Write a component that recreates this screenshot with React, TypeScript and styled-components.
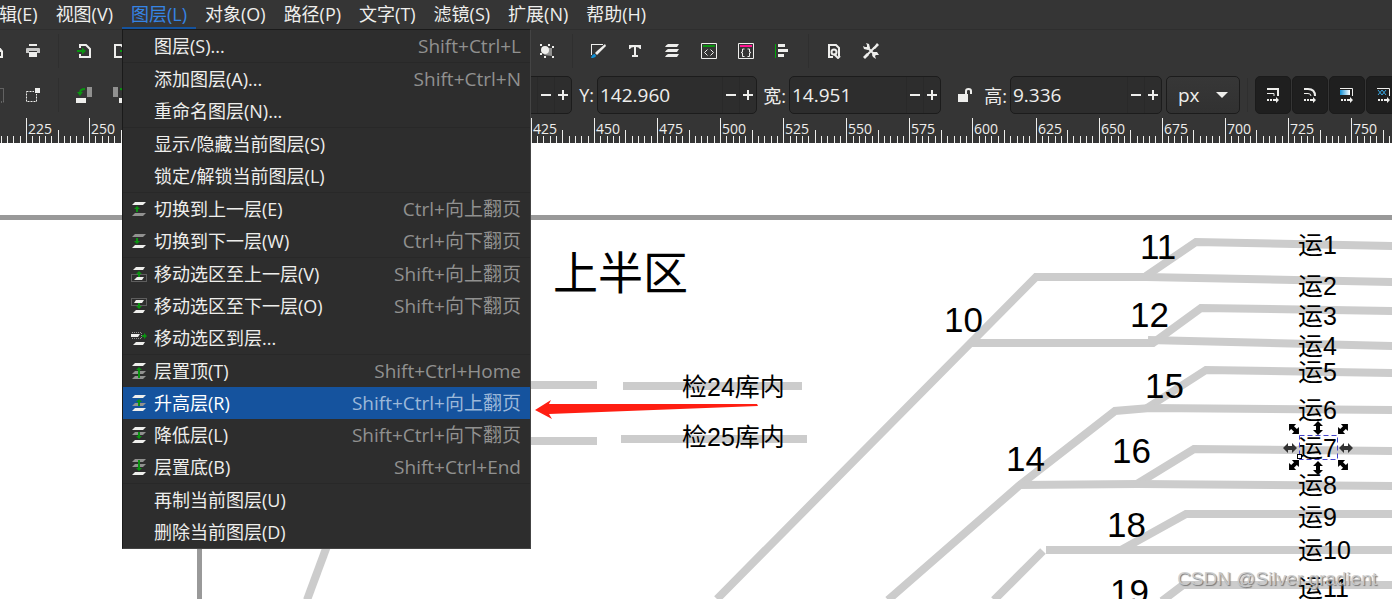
import React from "react";
import styled, { createGlobalStyle, css } from "styled-components";

const GlobalStyle = createGlobalStyle`
  * { box-sizing: border-box; }
  html, body { margin: 0; background: #ffffff; overflow: hidden; }
  body, button, input, select {
    font-family: "Open Sans", "Noto Sans CJK SC", sans-serif;
    font-size: 18px;
    color: #eeeeec;
  }
  button, input, select { margin: 0; padding: 0; border: 0; background: none; outline: none; }
`;

const WHITE = "#eeeeec";
const GRAY = "#919190";
const GREEN = "#0a9410";

/* ---------- layout ---------- */

const Window = styled.div`
  display: flex;
  flex-direction: column;
  min-height: 100vh;
  overflow: hidden;
`;

const Header = styled.header`
  background: #353535;
`;

const MenuBar = styled.nav`
  display: flex;
  height: 30px;
  margin-left: -28px;
  border-bottom: 1px solid #2e2e2e;
`;

const MenuSlot = styled.div`
  position: relative;
  flex: none;
`;

const MenuTitle = styled.button<{ $active?: boolean }>`
  height: 29px;
  padding: 2px 9px 0;
  line-height: 25px;
  white-space: nowrap;
  border-bottom: 2px solid transparent;
  ${(p) =>
    p.$active &&
    css`
      color: #3584e4;
      border-bottom-color: #15539e;
    `}
`;

const Dropdown = styled.div`
  position: absolute;
  z-index: 10;
  top: 29px;
  left: 0;
  width: 409px;
  background: #2d2d2d;
  border: 1px solid #1a1a1a;
  border-right-color: #444444;
  border-bottom-color: #444444;
`;

const Divider = styled.hr`
  height: 1px;
  margin: 0;
  border: 0;
  background: #282828;
`;

const MenuRow = styled.button<{ $selected?: boolean }>`
  display: flex;
  align-items: center;
  width: 100%;
  height: 32px;
  padding: 0 9px 0 8px;
  line-height: 32px;
  white-space: nowrap;
  text-align: left;
  background: ${(p) => (p.$selected ? "#15539e" : "transparent")};
  color: ${(p) => (p.$selected ? "#ffffff" : WHITE)};
`;

const RowIcon = styled.span`
  display: flex;
  width: 23px;
  flex: none;
`;

const RowLabel = styled.span`
  flex: 1;
`;

const Shortcut = styled.kbd<{ $selected?: boolean }>`
  font-family: inherit;
  font-size: 19px;
  color: ${(p) => (p.$selected ? "#9cb8d9" : GRAY)};
`;

const ToolRow = styled.div`
  display: flex;
  align-items: center;
  height: 42px;
  margin-left: -23px;
`;

const ControlRow = styled(ToolRow)`
  height: 46px;
`;

const ToolButton = styled.button`
  display: flex;
  align-items: center;
  justify-content: center;
  flex: none;
  width: 37px;
  height: 36px;
`;

const Separator = styled.div`
  flex: none;
  width: 1px;
  height: 34px;
  margin: 0 6px 0 7px;
  background: #2f2f2f;
`;

const Spacer = styled.div<{ $w: number }>`
  flex: none;
  width: ${(p) => p.$w}px;
`;

const FieldLabel = styled.label<{ $w: number }>`
  flex: none;
  width: ${(p) => p.$w}px;
  text-align: right;
  padding-right: 3px;
  white-space: nowrap;
`;

const SpinBox = styled.div<{ $w: number }>`
  display: flex;
  flex: none;
  width: ${(p) => p.$w}px;
  height: 38px;
  border: 1px solid #1c1c1c;
  border-radius: 5px;
  background: #2d2d2d;
`;

const SpinInput = styled.input`
  flex: 1;
  min-width: 0;
  padding-left: 2px;
  font-size: 19px;
`;

const SpinButton = styled.button`
  display: flex;
  align-items: center;
  justify-content: center;
  flex: none;
  width: 17px;
  border-left: 1px solid #292929;
`;

const UnitBox = styled.div`
  position: relative;
  flex: none;
  width: 74px;
  height: 38px;
  margin: 0 0 0 4px;
  border: 1px solid #1c1c1c;
  border-radius: 5px;
  background: linear-gradient(#373737, #313131);
  & > svg {
    position: absolute;
    right: 11px;
    top: 14px;
    pointer-events: none;
  }
`;

const UnitSelect = styled.select`
  width: 100%;
  height: 36px;
  padding-left: 11px;
  appearance: none;
  font-size: 19px;
`;

const ToggleButton = styled.button`
  display: flex;
  align-items: center;
  justify-content: center;
  flex: none;
  width: 36px;
  height: 38px;
  margin-left: 1px;
  border-radius: 5px;
  border: 1px solid #1b1b1b;
  background: #1f1f1f;
`;

const RulerSvg = styled.svg`
  display: block;
  width: 100%;
  height: 25px;
  text {
    font-family: "Open Sans", sans-serif;
    font-size: 14px;
    fill: ${WHITE};
  }
`;

const Canvas = styled.main`
  position: relative;
  display: flex;
  flex: 1;
  min-height: 456px;
  background: #ffffff;
`;

const Drawing = styled.svg`
  display: block;
  flex: 1;
  min-width: 0;
  font-family: "Liberation Sans", "Noto Sans CJK SC", sans-serif;
`;

const Watermark = styled.div`
  position: absolute;
  right: 15px;
  bottom: 9px;
  font-family: "Liberation Sans", sans-serif;
  font-size: 19px;
  line-height: 22px;
  color: rgba(205, 205, 205, 0.9);
  text-shadow: 1px 1px 1px #777777;
  white-space: nowrap;
`;

/* ---------- icons ---------- */

const Icon = ({ children, size = 16 }: { children: React.ReactNode; size?: number }) => (
  <svg width={size} height={size} viewBox={`0 0 ${size} ${size}`} fill="none" aria-hidden="true">
    {children}
  </svg>
);

const Sheet = ({ y, c = WHITE }: { y: number; c?: string }) => (
  <path d={`M4 ${y}H15L12 ${y + 3}H1Z`} fill={c} />
);
const up = (x: number, y: number, h: number) =>
  `M${x} ${y}l3 3h-2v${h - 3}h-2v${3 - h}h-2z`;
const down = (x: number, y: number, h: number) =>
  `M${x} ${y}l3 -3h-2v${3 - h}h-2v${h - 3}h-2z`;

const menuIcons: Record<string, React.ReactNode> = {
  prev: (<><Sheet y={1} /><path d={up(6, 5, 6)} fill={GREEN} /><Sheet y={12} c={GRAY} /></>),
  next: (<><Sheet y={1} c={GRAY} /><path d={down(6, 11, 6)} fill={GREEN} /><Sheet y={12} /></>),
  moveUp: (
    <>
      <path d="M5 1H14L12 4H2Z" fill={WHITE} />
      <path d="M.5 8.5H15.5V15.5H.5Z" stroke={GRAY} strokeDasharray="1 1" />
      <path d="M6 11H13L11 14H3Z" fill={WHITE} />
      <path d={up(8, 5, 6)} fill={GREEN} />
    </>
  ),
  moveDown: (
    <>
      <path d="M.5 .5H15.5V7.5H.5Z" stroke={GRAY} strokeDasharray="1 1" />
      <path d="M5 2H13L11 5H3Z" fill={WHITE} />
      <path d={down(8, 11, 6)} fill={GREEN} />
      <path d="M5 12H14L12 15H2Z" fill={WHITE} />
    </>
  ),
  moveTo: (
    <>
      <path d="M1 2.5H11M1 8.5H11M10.5 3V9" stroke={GRAY} strokeDasharray="1 1" />
      <path d="M0 4H9L7 7H0Z" fill={WHITE} />
      <path d="M11 5h2v-2l3 3l-3 3v-2h-2z" fill={GREEN} />
      <path d="M5 12H14L12 15H2Z" fill={WHITE} />
    </>
  ),
  top: (<><Sheet y={0} /><Sheet y={8} c={GRAY} /><Sheet y={13} c={GRAY} /><path d={up(8, 4, 11)} fill={GREEN} /></>),
  raise: (<><Sheet y={0} /><Sheet y={8} c={GRAY} /><path d={up(8, 4, 7)} fill={GREEN} /><Sheet y={13} /></>),
  lower: (<><Sheet y={0} /><Sheet y={5} c={GRAY} /><path d={down(8, 12, 7)} fill={GREEN} /><Sheet y={13} /></>),
  bottom: (<><Sheet y={0} c={GRAY} /><Sheet y={5} c={GRAY} /><path d={down(8, 12, 11)} fill={GREEN} /><Sheet y={13} /></>),
};

const MinusIcon = () => (
  <Icon size={12}><path d="M1 5H11V7H1Z" fill={WHITE} /></Icon>
);
const PlusIcon = () => (
  <Icon size={12}><path d="M1 5H5V1H7V5H11V7H7V11H5V7H1Z" fill={WHITE} /></Icon>
);

const SaveIcon = () => (
  <Icon><path d="M1 3H11L15 8V15H1Z" fill={WHITE} /><path d="M10 9H13V13H10Z" fill="#353535" /></Icon>
);
const PrintIcon = () => (
  <Icon>
    <path d="M4 1H12V3H4Z" fill={WHITE} />
    <path d="M1 6Q1 5 2 5H14Q15 5 15 6V10H12V8H4V10H1Z" fill="#c8c8c7" />
    <path d="M4 9H12V14H4Z" fill={WHITE} />
  </Icon>
);
const ImportIcon = () => (
  <Icon>
    <path d="M4 5V2H10L14 6V14H4V11" stroke={WHITE} strokeWidth="2" />
    <path d="M1 7H6V4.5L10 8L6 11.5V9H1Z" fill={GREEN} />
  </Icon>
);
const ExportIcon = () => (
  <Icon>
    <path d="M11 5L8 2H2V14H11V11" stroke={WHITE} strokeWidth="2" />
    <path d="M7 7H11V4.5L15 8L11 11.5V9H7Z" fill={GREEN} />
  </Icon>
);
const GroupIcon = () => (
  <Icon>
    <path d="M8 5H13V13L5 12Z" fill={GRAY} />
    <circle cx="6" cy="7" r="4" fill={WHITE} />
    <path d="M1 1h2v2H1zM9 1h2v2H9zM1 10h2v2H1zM13 3h2v2h-2zM5 13h2v2H5zM13 13h2v2h-2z" fill={WHITE} />
  </Icon>
);
const StrokeIcon = () => (
  <Icon>
    <path d="M1 12V1H13" stroke={WHITE} strokeWidth="1" shapeRendering="crispEdges" />
    <path d="M15 1L16 3L9 10L7 12L5 10L7 8Z" fill={WHITE} />
    <path d="M1 15Q2 11 5 11L6 13Q5 15 1 15Z" fill="#0e8fd6" />
  </Icon>
);
const TextIcon = () => (
  <Icon><path d="M2 2H14V6H13Q12 4 9 4V12H11V14H5V12H7V4Q4 4 3 6H2Z" fill={WHITE} /></Icon>
);
const LayersIcon = () => (
  <Icon><path d="M4 1H15L13 4H1Q2 2 4 1ZM4 6H15L13 9H1Q2 7 4 6ZM4 11H15L13 14H1Q2 12 4 11Z" fill={WHITE} /></Icon>
);
const XmlIcon = () => (
  <Icon>
    <path d="M.5 .5H15.5V15.5H.5Z" stroke={WHITE} />
    <path d="M2 2H14V4H2Z" fill={GREEN} />
    <path d="M6.500 6.500L3.500 9.500L6.500 12.500M9.500 6.500L12.500 9.500L9.500 12.500" stroke={WHITE} />
  </Icon>
);
const CssIcon = () => (
  <Icon>
    <path d="M.5 .5H15.5V15.5H.5Z" stroke={WHITE} />
    <path d="M2 2H14V4H2Z" fill="#ff1391" />
    <path d="M6.500 6H4.500V9L3 9.500L4.500 10V13.500H6.500M9.500 6H11.500V9L13 9.500L11.500 10V13.500H9.500" stroke={WHITE} />
  </Icon>
);
const AlignIcon = () => (
  <Icon>
    <path d="M0 1H1V15H0Z" fill="#00a808" shapeRendering="crispEdges" />
    <path d="M3 1H10V4H3ZM3 6H13V9H3ZM3 11H9V14H3Z" fill={WHITE} />
  </Icon>
);
const DocIcon = () => (
  <Icon>
    <path d="M7 14H3V2H10L13 5V13" stroke={WHITE} strokeWidth="2" />
    <circle cx="8" cy="9" r="2.500" stroke={WHITE} strokeWidth="2" />
    <path d="M8 11L12 15L14 13" stroke={WHITE} strokeWidth="2" />
  </Icon>
);
const ToolsIcon = () => (
  <Icon>
    <path d="M4 4L12 12M12 4L3 13" stroke={WHITE} strokeWidth="2" />
    <path d="M3 0L6 1L7 5L5 7L1 6L0 3L2 4L4 4L4 2ZM10 9L14 9L16 12L13 12L12 13L13 16L10 14L9 12Z" fill={WHITE} />
    <path d="M14 0L16 2L12 6L10 5ZM4 10L6 12L2 16L0 14Z" fill={WHITE} />
  </Icon>
);
const DottedIcon = () => (
  <Icon>
    <path d="M.5 1.500H15.500V15H.5Z" stroke={GRAY} strokeDasharray="1 1" />
    <path d="M2 3H12V13H2Z" fill="#5a5a5a" />
  </Icon>
);
const SelectCornerIcon = () => (
  <Icon>
    <path d="M1.500 4.500H11.500V14.500H1.500Z" stroke={WHITE} strokeDasharray="2 1" />
    <path d="M9 0H16V7H9Z" fill="#353535" />
    <path d="M10 1H15V6H10Z" fill={WHITE} />
  </Icon>
);
const RotateLeftIcon = () => (
  <Icon>
    <path d="M11 0H16V10H11Z" fill={GRAY} />
    <path d="M0 11H10V16H0Z" fill={WHITE} />
    <path d="M9 2Q4 2 4 6" stroke={GREEN} strokeWidth="2" />
    <path d="M1 5H7L4 9Z" fill={GREEN} />
  </Icon>
);
const RotateRightIcon = () => (
  <Icon>
    <path d="M0 0H5V10H0Z" fill={GRAY} />
    <path d="M6 11H16V16H6Z" fill={WHITE} />
    <path d="M7 2Q12 2 12 6" stroke={GREEN} strokeWidth="2" />
    <path d="M9 5H15L12 9Z" fill={GREEN} />
  </Icon>
);
const UnlockIcon = () => (
  <Icon>
    <path d="M1 7H11V15H1Z" fill={WHITE} />
    <path d="M9 7V4Q9 2 11.500 2Q14 2 14 4V7" stroke={WHITE} strokeWidth="2" />
  </Icon>
);

const MoveArrow = () => (
  <path d="M2 12H4V14H2ZM5 12H7V14H5ZM8 12H11V10L14 13L11 16V14H8Z" fill={WHITE} />
);
const ScaleStrokeIcon = () => (
  <Icon>
    <path d="M2 2H13V9" stroke={WHITE} strokeWidth="2" />
    <path d="M2 6.500H9V9" stroke={WHITE} /><MoveArrow />
  </Icon>
);
const ScaleCornersIcon = () => (
  <Icon>
    <path d="M2 2H6Q13 2 13 9" stroke={WHITE} strokeWidth="2" />
    <path d="M2 6.500H6Q9 6.500 9 9" stroke={WHITE} /><MoveArrow />
  </Icon>
);
const MoveGradientIcon = () => (
  <Icon>
    <defs>
      <linearGradient id="fade"><stop stopColor="#0e8fd6" /><stop offset="1" stopColor="#ffffff" /></linearGradient>
    </defs>
    <path d="M1 1.500H13.500V9" stroke={WHITE} />
    <path d="M1 3H11V8H1Z" fill="url(#fade)" /><MoveArrow />
  </Icon>
);
const MovePatternIcon = () => (
  <Icon>
    <path d="M1 1.500H13.500V9" stroke={WHITE} />
    <path d="M2 3L6 8M6 3L10 8M6 3L2 8M10 3L6 8" stroke="#3aa6e0" /><MoveArrow />
  </Icon>
);

/* ---------- data ---------- */

type Entry = { label: string; keys?: string; icon?: string; selected?: boolean };

const layerMenu: Entry[][] = [
  [{ label: "图层(S)...", keys: "Shift+Ctrl+L" }],
  [{ label: "添加图层(A)...", keys: "Shift+Ctrl+N" }, { label: "重命名图层(N)..." }],
  [{ label: "显示/隐藏当前图层(S)" }, { label: "锁定/解锁当前图层(L)" }],
  [
    { label: "切换到上一层(E)", keys: "Ctrl+向上翻页", icon: "prev" },
    { label: "切换到下一层(W)", keys: "Ctrl+向下翻页", icon: "next" },
  ],
  [
    { label: "移动选区至上一层(V)", keys: "Shift+向上翻页", icon: "moveUp" },
    { label: "移动选区至下一层(O)", keys: "Shift+向下翻页", icon: "moveDown" },
    { label: "移动选区到层...", icon: "moveTo" },
  ],
  [
    { label: "层置顶(T)", keys: "Shift+Ctrl+Home", icon: "top" },
    { label: "升高层(R)", keys: "Shift+Ctrl+向上翻页", icon: "raise", selected: true },
    { label: "降低层(L)", keys: "Shift+Ctrl+向下翻页", icon: "lower" },
    { label: "层置底(B)", keys: "Shift+Ctrl+End", icon: "bottom" },
  ],
  [{ label: "再制当前图层(U)" }, { label: "删除当前图层(D)" }],
];

const menus = ["编辑(E)", "视图(V)", "图层(L)", "对象(O)", "路径(P)", "文字(T)", "滤镜(S)", "扩展(N)", "帮助(H)"];

const tracks = [
  "M1146 276L1196 242L1392 246H2600",
  "M717 599L1036 277H1146L1392 282H2600",
  "M969 343H1153L1201 308L1392 311H2600",
  "M1148 340L1392 346H2600",
  "M1147 408L1206 370L1392 373H2600",
  "M888 600L1021 484L1115 411L1150 408L1392 410H2600",
  "M1137 484L1194 449L1392 451H2600",
  "M1018 485L1138 484L1392 486H2600",
  "M1121 550L1186 514H2600",
  "M1046 550H2600",
  "M994 600L1043 551",
  "M1162 601L1183 585H2600",
  "M327 546L307 600",
  "M480 385H597",
  "M623 386H802",
  "M480 441H597",
  "M621 439H807",
];

const switches: [string, number, number][] = [
  ["10", 944, 332], ["11", 1140, 259], ["12", 1130, 327], ["15", 1145, 398], ["14", 1006, 471],
  ["16", 1112, 463], ["18", 1107, 537], ["19", 1110, 604],
];

const lanes: [string, number][] = [
  ["运1", 254], ["运2", 295], ["运3", 325], ["运4", 355], ["运5", 381], ["运6", 419],
  ["运7", 457], ["运8", 494], ["运9", 526], ["运10", 559], ["运11", 597],
];

const handles: [number, number, number][] = [
  [1294, 429, 45], [1343, 429, -45], [1294, 465, -45], [1343, 465, 45],
  [1318, 428, 90], [1318, 468, 90], [1290, 448, 0], [1346, 448, 0],
];

/* ---------- parts ---------- */

const LayerMenu = () => (
  <Dropdown role="menu">
    {layerMenu.map((group, g) => (
      <React.Fragment key={g}>
        {g > 0 && <Divider />}
        {group.map((e) => (
          <MenuRow key={e.label} role="menuitem" $selected={e.selected}>
            <RowIcon>{e.icon && <Icon>{menuIcons[e.icon]}</Icon>}</RowIcon>
            <RowLabel>{e.label}</RowLabel>
            {e.keys && <Shortcut $selected={e.selected}>{e.keys}</Shortcut>}
          </MenuRow>
        ))}
      </React.Fragment>
    ))}
  </Dropdown>
);

const Tool = ({ name, children }: { name: string; children: React.ReactNode }) => (
  <ToolButton aria-label={name}>{children}</ToolButton>
);

const Spin = ({ id, value, width, name }: { id: string; value: string; width: number; name?: string }) => (
  <SpinBox $w={width}>
    <SpinInput id={id} defaultValue={value} aria-label={name} />
    <SpinButton aria-label="减"><MinusIcon /></SpinButton>
    <SpinButton aria-label="加"><PlusIcon /></SpinButton>
  </SpinBox>
);

const Ruler = () => {
  const ticks: React.ReactNode[] = [];
  for (let i = -10; i < 420; i++) {
    const x = Math.round(26 + i * 6.31);
    const top = i % 10 === 0 ? 0 : i % 5 === 0 ? 12 : 18;
    ticks.push(<rect key={i} x={x} y={top} width="1" height={25 - top} fill={WHITE} />);
    if (i % 10 === 0) {
      ticks.push(<text key={`t${i}`} x={x + 2} y="16">{225 + i * 2.5}</text>);
    }
  }
  return <RulerSvg aria-hidden="true">{ticks}</RulerSvg>;
};

const Diagram = () => (
  <Drawing>
    <g transform="translate(0 -143)">
      <path d="M0 217.500H2600M199.500 217V2000" stroke="#999999" strokeWidth="5" fill="none" />
      {tracks.map((d) => (
        <path key={d} d={d} stroke="#cccccc" strokeWidth="8" fill="none" />
      ))}
      <text x="553" y="290" fontSize="45">上半区</text>
      <text x="682" y="396" fontSize="25">检24库内</text>
      <text x="682" y="446" fontSize="25">检25库内</text>
      {switches.map(([t, x, y]) => (
        <text key={t} x={x} y={y} fontSize="35">{t}</text>
      ))}
      {lanes.map(([t, y]) => (
        <text key={t} x="1298" y={y} fontSize="25">{t}</text>
      ))}
      <rect x="1299.500" y="435.500" width="38" height="24" fill="none" stroke="#4343c8" strokeDasharray="5 3" />
      <rect x="1297.500" y="454.500" width="4" height="4" fill="#ffffff" stroke="#000000" />
      {handles.map(([x, y, a], i) => (
        <path
          key={i}
          d="M-7 0L-2 -5V-2H2V-5L7 0L2 5V2H-2V5Z"
          transform={`translate(${x} ${y}) rotate(${a})`}
          fill={a === 0 ? "#333333" : "#000000"}
        />
      ))}
      <path d="M535 410L551 400L549 404L757 404L758 406L549 414L552 419Z" fill="#ff1e12" />
    </g>
  </Drawing>
);

export default function App() {
  return (
    <Window>
      <GlobalStyle />
      <Header>
        <MenuBar>
          {menus.map((m) => {
            const open = m === "图层(L)";
            return (
              <MenuSlot key={m}>
                <MenuTitle $active={open} aria-expanded={open}>{m}</MenuTitle>
                {open && <LayerMenu />}
              </MenuSlot>
            );
          })}
        </MenuBar>
        <ToolRow>
          <Tool name="保存"><SaveIcon /></Tool>
          <Tool name="打印"><PrintIcon /></Tool>
          <Separator />
          <Tool name="导入"><ImportIcon /></Tool>
          <Tool name="导出"><ExportIcon /></Tool>
          <Spacer $w={389} />
          <Tool name="群组"><GroupIcon /></Tool>
          <Separator />
          <Tool name="填充和描边"><StrokeIcon /></Tool>
          <Tool name="文字"><TextIcon /></Tool>
          <Tool name="图层"><LayersIcon /></Tool>
          <Tool name="XML"><XmlIcon /></Tool>
          <Tool name="CSS"><CssIcon /></Tool>
          <Tool name="对齐"><AlignIcon /></Tool>
          <Separator />
          <Tool name="文档属性"><DocIcon /></Tool>
          <Tool name="首选项"><ToolsIcon /></Tool>
        </ToolRow>
        <ControlRow>
          <Tool name="全选"><DottedIcon /></Tool>
          <Tool name="选择框"><SelectCornerIcon /></Tool>
          <Separator />
          <Tool name="逆时针旋转"><RotateLeftIcon /></Tool>
          <Tool name="顺时针旋转"><RotateRightIcon /></Tool>
          <Spacer $w={273} />
          <Spin id="x" name="X" value="" width={160} />
          <FieldLabel htmlFor="y" $w={25}>Y:</FieldLabel>
          <Spin id="y" value="142.960" width={160} />
          <FieldLabel htmlFor="w" $w={32}>宽:</FieldLabel>
          <Spin id="w" value="14.951" width={152} />
          <Spacer $w={5} />
          <Tool name="锁定比例"><UnlockIcon /></Tool>
          <FieldLabel htmlFor="h" $w={27}>高:</FieldLabel>
          <Spin id="h" value="9.336" width={152} />
          <UnitBox>
            <UnitSelect aria-label="单位" defaultValue="px">
              <option>px</option>
              <option>mm</option>
            </UnitSelect>
            <svg width="12" height="8" viewBox="0 0 12 8" aria-hidden="true">
              <path d="M0 1H12L6 7Z" fill={WHITE} />
            </svg>
          </UnitBox>
          <Separator />
          <ToggleButton aria-label="缩放描边"><ScaleStrokeIcon /></ToggleButton>
          <ToggleButton aria-label="缩放圆角"><ScaleCornersIcon /></ToggleButton>
          <ToggleButton aria-label="移动渐变"><MoveGradientIcon /></ToggleButton>
          <ToggleButton aria-label="移动图案"><MovePatternIcon /></ToggleButton>
        </ControlRow>
        <Ruler />
      </Header>
      <Canvas>
        <Diagram />
        <Watermark>CSDN @Silver gradient</Watermark>
      </Canvas>
    </Window>
  );
}
